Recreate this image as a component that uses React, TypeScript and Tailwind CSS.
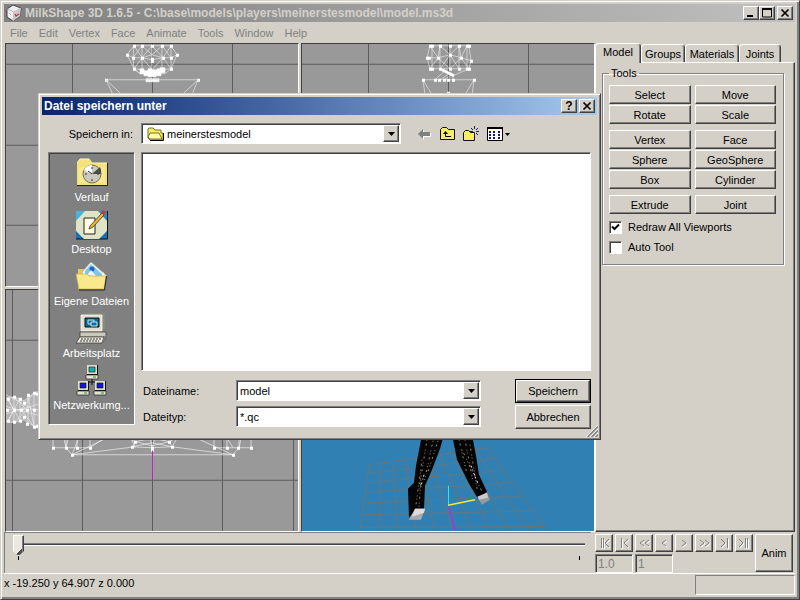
import React from "react";

const raised =
  "border border-t-white border-l-white border-b-[#404040] border-r-[#404040] shadow-[inset_-1px_-1px_0_#808080] bg-[#d4d0c8]";
const sunken =
  "border border-t-[#808080] border-l-[#808080] border-b-white border-r-white shadow-[inset_1px_1px_0_#404040]";

type Pt = [number, number];

function Mesh({ lines, dots, opacity = 0.75 }: { lines: string; dots: Pt[]; opacity?: number }) {
  return (
    <g>
      <path d={lines} fill="none" stroke="#f2f2f2" strokeWidth="0.8" opacity={opacity} />
      {dots.map(([x, y], i) => (
        <rect key={i} x={x - 1} y={y - 1} width="3" height="3" fill="#fff" />
      ))}
    </g>
  );
}

function GridLines({ xs, ys }: { xs: number[]; ys: number[] }) {
  return (
    <g fill="#5c5c5c">
      {xs.map((x) => (
        <rect key={`x${x}`} x={x} y="0" width="1" height="600" />
      ))}
      {ys.map((y) => (
        <rect key={`y${y}`} x="0" y={y} width="800" height="1" />
      ))}
    </g>
  );
}

function Viewport({ box, label, children, fill }: { box: string; label: string; children: React.ReactNode; fill: string }) {
  return (
    <div className="min-h-0 min-w-0 overflow-hidden border border-t-[#404040] border-l-[#404040] border-b-white border-r-white">
      <svg role="img" aria-label={label} viewBox={box} preserveAspectRatio="xMidYMid slice" className={`block h-full w-full ${fill}`}>
        {children}
      </svg>
    </div>
  );
}

function FrontView() {
  return (
    <Viewport box="6 44 292 242" label="Front view" fill="bg-[#999]">
      <GridLines xs={[72, 152, 232]} ys={[64, 145, 225]} />
      <Mesh
        lines="M134 46H171L177 55L171 69L165 74H140L134 69L127 55ZM127 55L133 58L142 58L152 55L163 58L171 58L177 55M134 46L133 58L134 69L142 58L134 46M142 46L142 70L134 69M142 46L152 55L162 46V70L171 69L163 58L171 46L171 69M152 46V76M142 46L133 58M162 46L171 58M142 58L152 70L163 58M152 46L142 58M152 46L163 58M134 69L140 74M142 58L152 60L163 58"
        dots={[[134, 46], [142, 46], [152, 46], [162, 46], [171, 46], [127, 55], [177, 55], [133, 58], [142, 58], [152, 59], [152, 61], [163, 58], [171, 58], [134, 69], [171, 69], [106, 80], [198, 80]]}
      />
      <path d="M136 46H133M170 46H173M140 69H144V71H148V69H152V70H157V69H160V68H165V73H161V76H156V77H148V76H144V74H140ZM146 79H159V82H146Z" fill="#fff" stroke="#fff" strokeWidth="0.6" />
      <path d="M106 80H198M106 80L113 95M106 80L122 95M198 80L192 95M198 80L182 95" stroke="#ddd" strokeWidth="0.8" fill="none" />
    </Viewport>
  );
}

function SideView() {
  return (
    <Viewport box="302 44 292 242" label="Side view" fill="bg-[#999]">
      <GridLines xs={[368, 448, 528]} ys={[64, 145, 225]} />
      <Mesh
        lines="M430 46H469L471 61L469 69H430L427 58ZM432 46V69M467 46V69M440 46V69M459 46V69M450 46V69M427 58H438L450 55L461 58L471 61M430 46L438 58L440 46L450 55L459 46L461 58L467 46M438 58L430 69M438 58L450 69L461 58L469 69M450 55L440 69M450 55L459 69M440 69L453 76L469 69M445 71L435 80M449 74L440 80M452 75L444 80M453 76V80M423 80H474M423 80L425 95M423 80L432 95M474 80L472 95M474 80L465 95"
        dots={[[430, 46], [432, 46], [440, 46], [450, 46], [459, 46], [467, 46], [469, 46], [427, 58], [429, 58], [438, 58], [450, 55], [461, 58], [471, 61], [430, 69], [432, 69], [440, 69], [450, 69], [459, 69], [467, 69], [469, 69], [423, 80], [435, 80], [439, 80], [444, 80], [448, 80], [453, 80], [474, 80], [448, 93]]}
      />
      <path d="M442 70L454 76" stroke="#fff" strokeWidth="3" />
    </Viewport>
  );
}

const headDots: Pt[] = [
  [8, 399], [14, 397], [20, 399], [28, 395], [34, 393],
  [7, 410], [14, 410], [21, 410], [27, 410], [34, 410],
  [8, 421], [14, 422], [20, 421], [24, 417], [27, 424], [34, 427], [24, 403], [37, 394], [37, 426],
];

function TopView() {
  return (
    <Viewport box="6 290 292 242" label="Top view" fill="bg-[#999]">
      <GridLines xs={[12, 82, 152, 222, 293]} ys={[340, 410, 480]} />
      <path d="M0 399L14 397L24 401L34 393L44 390V430L34 427L24 420L14 423L0 421Z" fill="#b4b4b4" />
      <Mesh
        lines="M0 399L14 397L24 401L34 393L44 390M0 421L14 423L24 420L34 427L44 430M0 410H44M8 399L20 421M20 399L8 421M28 395L34 427M34 393L21 410L34 427M14 397V423M20 399V421M28 395V424M34 393V427M7 399L14 410L8 421M14 397L27 410L14 423M0 405L40 416M0 416L40 404M6 395L34 410"
        dots={headDots}
      />
      <Mesh
        opacity={0.85}
        lines="M53 435V448H90V435M66 435V448L72 455H233L239 448V435M66 448L69 435M72 455L80 435M77 448V435M72 455L103 440M90 448L105 438M72 455L135 447L132 441M233 455L172 447L178 437M233 455L200 440M214 448V435M227 448V435M251 435V448H214M132 447L152 443L172 447L169 442L152 446L136 442L132 447L152 448L172 447M126 438L136 442L152 438L169 442L177 438M150 435L152 448L156 435M141 440H165M233 448L225 435M239 448L242 435M66 448L63 435"
        dots={[[53, 448], [66, 448], [77, 448], [90, 448], [72, 455], [233, 455], [214, 448], [227, 448], [238, 448], [251, 448], [132, 447], [172, 447], [135, 442], [169, 442], [152, 448], [152, 450]]}
      />
      <rect x="152" y="451" width="1" height="29" fill="#c81ec8" />
    </Viewport>
  );
}

function PerspectiveView() {
  const rows = [0, 0.13, 0.27, 0.42, 0.58, 0.76, 0.95, 1.16, 1.4];
  const cols = [0, 0.1, 0.2, 0.3, 0.4, 0.5, 0.6, 0.7, 0.8, 0.9, 1];
  return (
    <Viewport box="302 290 292 242" label="3D view" fill="bg-[#3180b4]">
      <g stroke="#61777f" strokeWidth="1">
        {rows.map((t) => (
          <line key={`r${t}`} x1={369 - 9 * t} y1={465 + 66 * t} x2={487 + 61 * t} y2={448 + 83 * t} />
        ))}
        {cols.map((u) => (
          <line key={`c${u}`} x1={369 + 118 * u} y1={465 - 17 * u} x2={360 + 188 * u} y2="531" />
        ))}
      </g>
      <path d="M422 435H444L440 449L432 470L425 486L424 509L416 509L409 518L408 489L414 483L416 466Z" fill="#050505" />
      <path d="M452 435H472L476 456L479 475L487 492L478 499L469 484L457 460Z" fill="#050505" />
      <path d="M427 440L419 489M433 441L424 483M438 441L427 475M422 460L416 505M421 480L419 507M459 440L467 474M465 440L473 482M470 445L477 489M462 450L482 492" fill="none" stroke="#c0a78a" strokeWidth="0.8" strokeDasharray="1 3 2 4 1 2" />
      <path d="M424 475L420 490M471 466L478 484" stroke="#eee" strokeWidth="1" strokeDasharray="2 2 1 3" />
      <path d="M415 509H425L421 520L409 520Z" fill="#aaa" />
      <path d="M415 509H425L424 513L412 517Z" fill="#ddd" />
      <path d="M477 497L487 493L490 500L482 505Z" fill="#999" />
      <path d="M478 497L487 493L488 498L479 500Z" fill="#ccc" />
      <rect x="448" y="486" width="1" height="20" fill="#2ee6e6" />
      <path d="M448 505.500L475 500" stroke="#eded30" strokeWidth="1.300" />
      <path d="M449 507L455 532" stroke="#b32bd6" strokeWidth="1.400" />
    </Viewport>
  );
}

function WinButton({ label, children }: { label: string; children: React.ReactNode }) {
  return (
    <button aria-label={label} className={`flex h-3.5 w-4 items-center justify-center ${raised}`}>
      <svg viewBox="0 0 12 10" className="h-2.5 w-3" fill="none" stroke="#000" strokeWidth="2">
        {children}
      </svg>
    </button>
  );
}

const closeCross = <path d="M2.500 1.500L9.500 8.500M9.500 1.500L2.500 8.500" strokeWidth="1.700" />;

function ToolButton({ children }: { children: string }) {
  return <button className={`h-[19px] text-center leading-3 ${raised}`}>{children}</button>;
}

function ToolsPanel() {
  return (
    <div className="flex min-h-0 w-[200px] shrink-0 flex-col">
      <div role="tablist" className="relative z-10 -mt-px flex h-5 items-end">
        <button role="tab" aria-selected="true" className="-mb-px h-5 w-[46px] rounded-t-sm border border-b-0 border-t-white border-l-white border-r-[#404040] bg-[#d4d0c8] pb-1 shadow-[inset_-1px_0_0_#808080]">
          Model
        </button>
        {[
          ["Groups", "w-11"],
          ["Materials", "w-[54px]"],
          ["Joints", "w-[42px]"],
        ].map(([name, width]) => (
          <button key={name} role="tab" aria-selected="false" className={`h-[18px] rounded-t-sm border border-b-0 border-l-white border-t-white border-r-[#404040] shadow-[inset_-1px_0_0_#808080] ${width}`}>
            {name}
          </button>
        ))}
      </div>
      <div role="tabpanel" className={`min-h-0 flex-1 px-1.5 pt-1 ${raised}`}>
        <fieldset className="h-[198px] w-[182px] border border-[#808080] px-1.5 shadow-[1px_1px_0_#fff,inset_1px_1px_0_#fff]">
          <legend className="px-0.5 leading-3">Tools</legend>
          <div className="mt-1.5 flex flex-col gap-1.5">
            {[
              ["Select", "Move", "Rotate", "Scale"],
              ["Vertex", "Face", "Sphere", "GeoSphere", "Box", "Cylinder"],
              ["Extrude", "Joint"],
            ].map((group) => (
              <div key={group[0]} className="grid w-[167px] grid-cols-2 gap-x-1 gap-y-px">
                {group.map((name) => (
                  <ToolButton key={name}>{name}</ToolButton>
                ))}
              </div>
            ))}
          </div>
          <div className="mt-[3px] flex flex-col">
            <Check label="Redraw All Viewports" on />
            <Check label="Auto Tool" />
          </div>
        </fieldset>
      </div>
    </div>
  );
}

function Check({ label, on = false }: { label: string; on?: boolean }) {
  return (
    <label className="flex h-5 items-center gap-1.5">
      <span className="grid">
        <input type="checkbox" defaultChecked={on} className={`peer col-start-1 row-start-1 size-[13px] appearance-none bg-white ${sunken}`} />
        <svg viewBox="0 0 13 13" className="pointer-events-none col-start-1 row-start-1 hidden size-[13px] peer-checked:block" fill="none" stroke="#000" strokeWidth="2">
          <path d="M3 5.500L5.500 8L10 3.500" />
        </svg>
      </span>
      {label}
    </label>
  );
}

function ArrowBox() {
  return (
    <span className={`pointer-events-none flex h-full w-4 items-center justify-center ${raised}`}>
      <svg viewBox="0 0 7 4" className="h-1 w-[7px]">
        <path d="M0 0H7L3.500 4Z" />
      </svg>
    </span>
  );
}

const placeIcons: Record<string, React.ReactNode> = {
  Verlauf: (
    <>
      <path d="M1 6L4 2H13L16 6H31V28H1Z" fill="#f6e27a" />
      <path d="M1 6L4 2H13L16 6H31" fill="none" stroke="#fff6b8" />
      <path d="M1 28.500H31.500V6" fill="none" stroke="#222" />
      <path d="M3 10H29V26H3Z" fill="#fbeea0" opacity=".6" />
      <circle cx="16" cy="17" r="9" fill="#c9c9bd" stroke="#77704e" />
      <path d="M16 8A9 9 0 0 0 8 13L16 17Z" fill="#fff" />
      <path d="M16 17L24 10A9 9 0 0 1 25 17Z" fill="#4d4d45" />
      <path d="M9 17H11M21 17H23M16 10V12M16 22V24M16 17L12 14" stroke="#333" />
    </>
  ),
  Desktop: (
    <>
      <rect x="0" y="2" width="31" height="28" fill="#1671b8" />
      <path d="M0 30H31.500V2" fill="none" stroke="#111" />
      <path d="M8 2H23L31 11V22L23 30H8L0 22V11Z" fill="#dfe5c4" />
      <path d="M0 2H9L0 12Z" fill="#47b4df" />
      <path d="M22 2H31V12Z" fill="#2b8ccb" />
      <path d="M8 9H19V25H8Z" fill="#fffbe0" stroke="#222" />
      <path d="M14 17L26 4L28 6L17 18L13 20Z" fill="#eeb53b" stroke="#333" strokeWidth=".8" />
      <path d="M25 4L27 1L30 3L28 6Z" fill="#d92f28" />
    </>
  ),
  "Eigene Dateien": (
    <>
      <path d="M2 8H11L13 11H28V28H2Z" fill="#e5c95c" />
      <path d="M6 11L15 1L31 15L26 20H8Z" fill="#fff" stroke="#8aa6bd" strokeWidth=".7" />
      <path d="M9 10L15 3L26 13V18H9Z" fill="#7fc3ef" />
      <circle cx="16" cy="8" r="2.500" fill="#2666b5" />
      <path d="M11 14L15 9L21 16Z" fill="#e9f6ff" />
      <path d="M0 13H11L13 15H30L28 28H3Z" fill="#fae98c" stroke="#d1ae43" strokeWidth=".7" />
      <path d="M3 29H28.500L30.500 15" fill="none" stroke="#222" />
    </>
  ),
  Arbeitsplatz: (
    <>
      <path d="M6 2L9 0H29V16L25 20H6Z" fill="#888a7b" />
      <path d="M5 2H26V18H5Z" fill="#e1dfcf" stroke="#fff" strokeWidth=".7" />
      <path d="M9 5H23V14H9Z" fill="#086b8d" stroke="#111" />
      <path d="M12 7H18V11H12Z" fill="#146aab" stroke="#ebffff" strokeWidth=".8" />
      <path d="M15 9H21V13H15Z" fill="#146aab" stroke="#ebffff" strokeWidth=".8" />
      <path d="M4 19H30V24H4Z" fill="#cac8b8" stroke="#333" strokeWidth=".7" />
      <path d="M4 24H28L26 30H0Z" fill="#eceadc" stroke="#333" strokeWidth=".7" />
      <path d="M5 26H25M4 28H23" stroke="#333" strokeDasharray="2 1" />
      <path d="M28 24L31 22V27L26 31" fill="#777" />
    </>
  ),
  "Netzwerkumg...": (
    <>
      <path d="M16 13V20M8 20V17H24V20" fill="none" stroke="#111" />
      {[
        [10, 0, "#10b4ae"],
        [1, 16, "#1418d2"],
        [18, 16, "#1418d2"],
      ].map(([x, y, c]) => (
        <g key={`${x}`} transform={`translate(${x} ${y})`}>
          <path d="M1 0H11V9H1Z" fill="#dddbcc" />
          <path d="M11.500 0V9.500H1" fill="none" stroke="#111" />
          <path d="M3 2H9V7H3Z" fill={c as string} stroke="#111" strokeWidth=".6" />
          <path d="M0 10H12V14H0Z" fill="#e5e3d4" stroke="#222" strokeWidth=".7" />
          <path d="M7 12H10" stroke="#22a030" />
        </g>
      ))}
    </>
  ),
};

function Dialog() {
  const combo = `flex bg-white p-px ${sunken}`;
  return (
    <section
      role="dialog"
      aria-labelledby="dialog-title"
      className="absolute top-[92px] left-[37px] z-20 flex h-[347px] w-[563px] flex-col border border-t-[#d4d0c8] border-l-[#d4d0c8] border-r-[#404040] border-b-[#404040] bg-[#d4d0c8] p-[3px] shadow-[inset_1px_1px_0_#fff,inset_-1px_-1px_0_#808080]"
    >
      <header className="flex h-[18px] shrink-0 items-center bg-linear-to-r from-[#0a246a] to-[#a6caf0] px-0.5 text-white">
        <h2 id="dialog-title" className="flex-1 text-xs font-bold">Datei speichern unter</h2>
        <div className="flex gap-0.5">
          <button aria-label="Hilfe" className={`h-3.5 w-4 text-xs leading-3 font-bold text-black ${raised}`}>?</button>
          <WinButton label="Schließen">{closeCross}</WinButton>
        </div>
      </header>

      <div className="mt-2 flex h-[21px] items-center">
        <label htmlFor="folder" className="w-[91px] text-right">Speichern in:</label>
        <div className={`ml-2 h-[21px] w-[260px] items-center ${combo}`}>
          <svg viewBox="0 0 17 14" className="ml-1 h-3.5 w-[17px]">
            <path d="M1 11V2L2 1H6L8 3H14V6H16V13H3Z" fill="#f6ef62" stroke="#77702b" />
            <path d="M1 10L3 6H12L15 12H3Z" fill="#fffca4" stroke="#77702b" />
            <path d="M3 13.500H16.500V6" fill="none" stroke="#000" />
          </svg>
          <select id="folder" className="min-w-0 flex-1 appearance-none bg-transparent pl-[3px] outline-none">
            <option>meinerstesmodel</option>
          </select>
          <ArrowBox />
        </div>
        <div className="ml-4 flex items-center gap-[7px]">
          <button aria-label="Zurück">
            <svg viewBox="0 0 16 16" className="size-4">
              <path d="M1 8L6 3V6H13V10H6V13Z" fill="#fff" transform="translate(1 1)" />
              <path d="M1 8L6 3V6H13V10H6V13Z" fill="#808080" />
            </svg>
          </button>
          <button aria-label="Übergeordneter Ordner">
            <svg viewBox="0 0 16 16" className="size-4">
              <path d="M.5 13.500V3.500L2.500 1.500H6.500L8.500 3.500H14.500V13.500Z" fill="#f6ef62" stroke="#111" />
              <path d="M11 10.500H5.500V7" fill="none" stroke="#000" />
              <path d="M3 8H8L5.500 5Z" />
            </svg>
          </button>
          <button aria-label="Neuer Ordner">
            <svg viewBox="0 0 17 16" className="h-4 w-[17px]">
              <path d="M.5 14.500V6.500L2.500 4.500H5.500L7.500 6.500H11.500V14.500Z" fill="#f6ef62" stroke="#111" />
              <path d="M11.500 0V3M11.500 7V10M7 5.500H10M13 5.500H16M8 2L10 4M13 7L15 9M15 2L13 4" stroke="#202050" />
            </svg>
          </button>
          <button aria-label="Ansicht">
            <svg viewBox="0 0 24 16" className="h-4 w-6">
              <path d="M.5 1.500H15.500V14.500H.5Z" fill="#fff" stroke="#000" />
              <path d="M0 2H16" stroke="#000" strokeWidth="2" />
              {[5, 8, 11].map((y) =>
                [2, 6, 11].map((x) => (
                  <path key={`${x}-${y}`} d={`M${x} ${y}H${x + 2}V${y + 2}H${x}Z`} fill="#14147c" />
                )),
              )}
              <path d="M18 7H23L20.500 10Z" />
            </svg>
          </button>
        </div>
      </div>

      <div className="mt-2 flex min-h-0 flex-1 pl-1.5">
        <nav className={`flex h-[273px] w-[87px] shrink-0 flex-col bg-[#808080] pt-1 ${sunken}`}>
          {Object.entries(placeIcons).map(([name, icon]) => (
            <button key={name} className="flex h-[52px] flex-col items-center whitespace-nowrap text-white">
              <svg viewBox="0 0 32 32" className="size-8">{icon}</svg>
              <span className="leading-4">{name}</span>
            </button>
          ))}
        </nav>
        <div className="ml-1.5 min-w-0 flex-1 pr-1.5">
          <div role="listbox" aria-label="Dateien" className={`h-[219px] bg-white ${sunken}`} />
          <div className="mt-2 flex justify-between">
            <div className="grid grid-cols-[95px_245px] items-center gap-y-[5px] self-start pt-px">
              <label htmlFor="filename" className="pl-0.5">Dateiname:</label>
              <div className={`h-[21px] ${combo}`}>
                <input id="filename" defaultValue="model" className="min-w-0 flex-1 bg-transparent pl-0.5 outline-none" />
                <ArrowBox />
              </div>
              <label htmlFor="filetype" className="pl-0.5">Dateityp:</label>
              <div className={`h-[21px] ${combo}`}>
                <select id="filetype" className="min-w-0 flex-1 appearance-none bg-transparent pl-0.5 outline-none">
                  <option>*.qc</option>
                </select>
                <ArrowBox />
              </div>
            </div>
            <div className="flex w-[76px] flex-col gap-0.5">
              <div className="border border-black">
                <button className={`block h-[22px] w-full ${raised}`}>Speichern</button>
              </div>
              <button className={`h-6 leading-5 ${raised}`}>Abbrechen</button>
            </div>
          </div>
        </div>
      </div>
      <svg viewBox="0 0 12 12" className="absolute right-0.5 bottom-0.5 size-3">
        <path d="M0 12L12 0M4 12L12 4M8 12L12 8" stroke="#fff" />
        <path d="M1.500 12L12 1.500M5.500 12L12 5.500M9.500 12L12 9.500" stroke="#808080" strokeWidth="1.500" />
      </svg>
    </section>
  );
}

const transport: [string, string][] = [
  ["Anfang", "M4.500 2V12M6.500 2V12M12 3L8 7L12 11"],
  ["Voriges Keyframe", "M4.500 2V12M11 3L7 7L11 11"],
  ["Rückwärts", "M7 4L3 7L7 10M12 4L8 7L12 10"],
  ["Schritt zurück", "M9 4L5 7L9 10"],
  ["Schritt vor", "M5 4L9 7L5 10"],
  ["Vorwärts", "M3 4L7 7L3 10M8 4L12 7L8 10"],
  ["Nächstes Keyframe", "M4 3L8 7L4 11M10.500 2V12"],
  ["Ende", "M2 3L6 7L2 11M8.500 2V12M10.500 2V12"],
];

function Timeline() {
  return (
    <div className="flex h-[42px] shrink-0 border-b border-white">
      <div className="min-w-0 flex-1 border border-r-0 border-b-0 border-[#808080] pt-0.5 pr-1.5 pl-2">
        <input
          type="range"
          aria-label="Frame"
          defaultValue={0}
          className="block h-[21px] w-full appearance-none bg-transparent bg-[linear-gradient(#808080_0_1px,#404040_1px_2px,#fff_2px_3px)] bg-[length:100%_3px] bg-[position:0_8px] bg-no-repeat [&::-webkit-slider-thumb]:h-[21px] [&::-webkit-slider-thumb]:w-[11px] [&::-webkit-slider-thumb]:appearance-none [&::-webkit-slider-thumb]:border [&::-webkit-slider-thumb]:border-white [&::-webkit-slider-thumb]:border-r-[#404040] [&::-webkit-slider-thumb]:bg-[linear-gradient(135deg,#ebe8e2_75%,#505050_75%)] [&::-webkit-slider-thumb]:shadow-[inset_-1px_0_0_#808080] [&::-webkit-slider-thumb]:[clip-path:polygon(0_0,100%_0,100%_76%,50%_100%,0_76%)]"
        />
        <div className="flex justify-between px-[5px]">
          <span className="h-1 w-px bg-black" />
          <span className="h-1 w-px bg-black" />
        </div>
      </div>
      <div className="flex w-[204px] shrink-0 justify-between pt-0.5 pr-0.5 pl-1">
        <div>
          <div className="flex gap-0.5">
            {transport.map(([name, d]) => (
              <button key={name} aria-label={name} disabled className={`flex h-[18px] w-[18px] items-center justify-center ${raised}`}>
                <svg viewBox="0 0 14 14" className="size-3.5" fill="none">
                  <path d={d} stroke="#fff" transform="translate(1 1)" />
                  <path d={d} stroke="#808080" />
                </svg>
              </button>
            ))}
          </div>
          <div className="mt-0.5 flex gap-0.5">
            <input aria-label="Aktueller Frame" disabled defaultValue="1.0" className={`h-[19px] w-[38px] bg-transparent px-0.5 text-xs text-[#808080] ${sunken}`} />
            <input aria-label="Letzter Frame" disabled defaultValue="1" className={`h-[19px] w-[38px] bg-transparent px-0.5 text-xs text-[#808080] ${sunken}`} />
          </div>
        </div>
        <button className={`h-[38px] w-[38px] ${raised}`}>Anim</button>
      </div>
    </div>
  );
}

export default function App() {
  return (
    <div className="relative flex h-screen w-full flex-col overflow-hidden border border-t-[#d4d0c8] border-l-[#d4d0c8] border-r-[#404040] border-b-[#404040] bg-[#d4d0c8] p-[3px] pr-1 font-['Liberation_Sans',Arial,sans-serif] text-[11px] leading-4 text-black shadow-[inset_1px_1px_0_#fff,inset_-2px_-2px_0_#808080]">
      <header className="flex h-[18px] shrink-0 items-center bg-linear-to-r from-[#808080] to-[#c0c0c0] pr-0.5 pl-0.5">
        <svg viewBox="0 0 16 16" className="size-4">
          <path d="M1 4L7 0L15 3L14 11L7 16L1 12Z" fill="#eee" stroke="#222" strokeWidth=".8" />
          <path d="M1 4L8 7L15 3M8 7L7 16" fill="none" stroke="#bbb" />
          <path d="M8 7L15 3L14 11L7 16Z" fill="#c9c9c9" />
          <path d="M9 9L10 11L13 9" fill="none" stroke="#d5333a" strokeWidth="1.500" />
          <path d="M3 8L5 10" stroke="#e79a9c" />
        </svg>
        <h1 className="ml-[3px] flex-1 truncate text-xs font-bold text-[#d4d0c8]">
          MilkShape 3D 1.6.5 - C:\base\models\players\meinerstesmodel\model.ms3d
        </h1>
        <div className="flex">
          <WinButton label="Minimieren"><path d="M2 8H8" /></WinButton>
          <WinButton label="Maximieren"><path d="M1.500 1V9H10.500V1" strokeWidth="1" /><path d="M1 1H11" /></WinButton>
          <span className="w-0.5" />
          <WinButton label="Beenden">{closeCross}</WinButton>
        </div>
      </header>
      <nav className="flex h-[21px] shrink-0 items-center pl-px text-[#808080]">
        {["File", "Edit", "Vertex", "Face", "Animate", "Tools", "Window", "Help"].map((m) => (
          <button key={m} className="pr-1.5 pl-[5px]">{m}</button>
        ))}
      </nav>
      <main className="flex min-h-0 flex-1 pl-px">
        <div className="grid min-w-0 flex-1 grid-cols-2 grid-rows-2 gap-0.5">
          <FrontView />
          <SideView />
          <TopView />
          <PerspectiveView />
        </div>
        <ToolsPanel />
      </main>
      <Timeline />
      <footer className="flex h-[22px] shrink-0 justify-between pt-px">
        <output>x -19.250 y 64.907 z 0.000</output>
        <div className="h-5 w-[100px] border border-t-[#808080] border-l-[#808080] border-b-white border-r-white" />
      </footer>
      <Dialog />
    </div>
  );
}
